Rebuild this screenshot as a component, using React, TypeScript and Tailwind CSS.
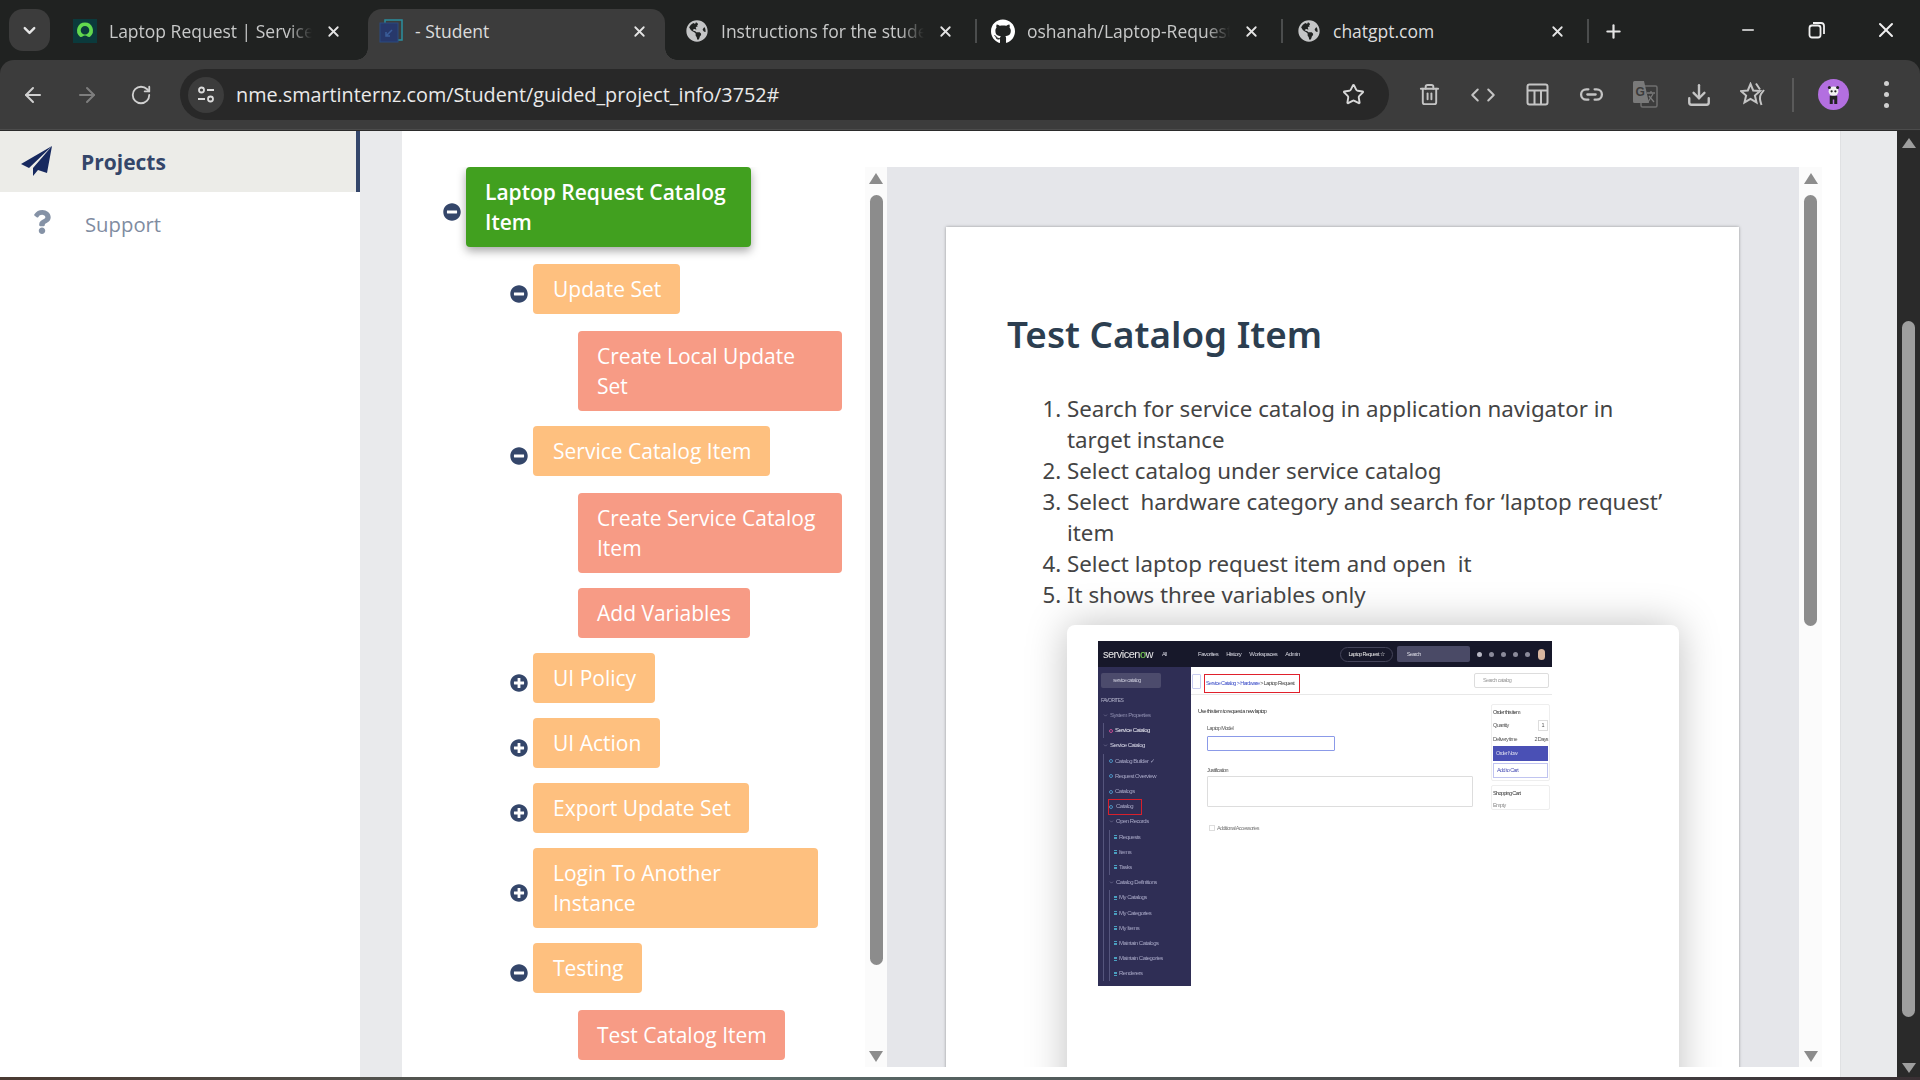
import React from "react";
import { ArrowLeft, ArrowRight, ChevronDown, ChevronLeft, ChevronRight, Download, Link2, Minus, Plus, RotateCw, Star, Trash2, X } from "lucide-react";
import { FaGithub, FaGlobeAmericas, FaMinusCircle, FaPlusCircle, FaQuestion } from "react-icons/fa";

function GreenFav() {
  return (
    <svg width="24" height="24" viewBox="0 0 24 24">
      <rect width="24" height="24" fill="#0b3a3c" />
      <path d="M12 3.5a8 8 0 0 0-5 14.2c.8.6 1.8.5 2.5-.1a3.9 3.9 0 0 1 5 0c.7.6 1.7.7 2.500.1A8 8 0 0 0 12 3.500zm0 12a4.300 4.300 0 1 1 0-8.600 4.300 4.300 0 0 1 0 8.600z" fill="#62d84e" />
    </svg>
  );
}
function StudentFav() {
  return (
    <svg width="24" height="24" viewBox="0 0 24 24" fill="none">
      <rect x="6" y="1" width="17" height="20" stroke="#2a8f9f" strokeWidth="1.500" />
      <rect x="1" y="4" width="18" height="19" fill="#27386b" stroke="#2b4a80" />
      <path d="M7 17l6-6M7 13v4h4" stroke="#3b5d9a" strokeWidth="1.500" />
    </svg>
  );
}
function Tab({ icon, title, active, fade, noSep }: { icon: React.ReactNode; title: string; active?: boolean; fade?: boolean; noSep?: boolean }) {
  return (
    <div className="relative flex h-[51px] w-[306px] shrink-0 items-center">
      {active && (
        <>
          <div className="absolute inset-y-0 left-0 w-[297px] rounded-t-[14px] bg-[#3c3c3c]" />
          <div className="absolute bottom-0 left-[-12px] size-[12px] bg-[radial-gradient(circle_at_0_0,#202221_11.500px,#3c3c3c_12px)]" />
          <div className="absolute bottom-0 left-[297px] size-[12px] bg-[radial-gradient(circle_at_100%_0,#202221_11.500px,#3c3c3c_12px)]" />
        </>
      )}
      <div className="relative flex w-[297px] items-center pl-[11px] pb-[7px]">
        <div className="flex size-[24px] shrink-0 items-center justify-center">{icon}</div>
        <div
          className={
            fade
              ? "ml-[12px] w-[203px] overflow-hidden whitespace-nowrap text-[17.500px] text-[#c8c9c9] [mask-image:linear-gradient(to_right,black_88%,transparent)]"
              : "ml-[12px] w-[203px] overflow-hidden whitespace-nowrap text-[17.500px] text-[#dcdcdc]"
          }
        >
          {title}
        </div>
        <X size={17} strokeWidth={2.5} className="ml-[13px] shrink-0 text-[#e4e4e4]" />
      </div>
      {!active && !noSep && <div className="mb-[7px] ml-[4px] h-[24px] w-[2px] shrink-0 bg-[#4b4d4d]" />}
    </div>
  );
}

function Tool({ children }: { children: React.ReactNode }) {
  return <div className="flex w-[54px] shrink-0 items-center justify-center text-[#c4c4c4]">{children}</div>;
}

function Chrome() {
  return (
    <div className="h-[131px] shrink-0 bg-[#202221] font-['Open_Sans',sans-serif]">
      <div className="flex h-[60px] items-end pl-[9px]">
        <div className="mb-[9px] flex h-[42px] w-[41px] shrink-0 items-center justify-center rounded-[14px] bg-[#3c3c3c] text-[#e6e6e6]">
          <ChevronDown size={19} strokeWidth={3} />
        </div>
        <div className="ml-[12px] flex">
          <Tab icon={<GreenFav />} title="Laptop Request | ServiceNow" fade noSep />
          <Tab icon={<StudentFav />} title="- Student" active />
          <Tab icon={<FaGlobeAmericas size={22} className="text-[#c4c5c6]" />} title="Instructions for the student" fade />
          <Tab icon={<FaGithub size={25} className="text-white" />} title="oshanah/Laptop-Request" fade />
          <Tab icon={<FaGlobeAmericas size={22} className="text-[#c4c5c6]" />} title="chatgpt.com" />
        </div>
        <Plus size={21} strokeWidth={2.5} className="mb-[18px] ml-[11px] shrink-0 text-[#e4e4e4]" />
        <div className="mb-[18px] ml-[115px] flex shrink-0 items-center text-[#f0f0f0]">
          <Minus size={18} strokeWidth={2} />
          <svg width="18" height="18" viewBox="0 0 18 18" fill="none" stroke="currentColor" strokeWidth="1.800" className="ml-[51px]">
            <rect x="1.500" y="4.500" width="11" height="12" rx="2.500" />
            <path d="M5 2h8a3 3 0 0 1 3 3v8" />
          </svg>
          <X size={24} strokeWidth={2} className="ml-[48px]" />
        </div>
      </div>
      <div className="flex h-[69px] items-center rounded-t-[14px] bg-[#3c3c3c]">
        <div className="flex w-[180px] shrink-0 items-center pl-[21px] text-[#d0d0d0]">
          <ArrowLeft size={24} strokeWidth={2} />
          <ArrowRight size={24} strokeWidth={2} className="ml-[30px] text-[#7e7e7e]" />
          <RotateCw size={22} strokeWidth={2} className="ml-[31px]" />
        </div>
        <div className="flex h-[51px] w-[1209px] shrink-0 items-center rounded-full bg-[#282828] pl-[8px]">
          <div className="flex size-[36px] items-center justify-center rounded-full bg-[#3c3c3c]">
            <svg width="20" height="20" viewBox="0 0 20 20" fill="none" stroke="#dcdcdc" strokeWidth="1.800">
              <circle cx="5.500" cy="5" r="2.500" />
              <path d="M11 5h7M2 14h7" />
              <circle cx="14.500" cy="14" r="2.500" />
            </svg>
          </div>
          <div className="ml-[12px] text-[19.800px] text-[#eaeaea]">nme.smartinternz.com/Student/guided_project_info/3752#</div>
          <Star size={23} strokeWidth={2} className="ml-auto mr-[24px] text-[#d8d8d8]" />
        </div>
        <div className="ml-[13px] flex items-center">
          <Tool><Trash2 size={23} strokeWidth={2} /></Tool>
          <Tool>
            <ChevronLeft size={22} strokeWidth={2.200} className="mr-[-3px]" />
            <ChevronRight size={22} strokeWidth={2.200} className="ml-[-3px]" />
          </Tool>
          <Tool>
            <svg width="23" height="23" viewBox="0 0 23 23" fill="none" stroke="currentColor" strokeWidth="2">
              <rect x="1.500" y="1.500" width="20" height="20" rx="2" />
              <path d="M1.500 7.500h20M8.500 7.500v14M15 7.500v14" />
            </svg>
          </Tool>
          <Tool><Link2 size={25} strokeWidth={2.200} /></Tool>
          <Tool>
            <svg width="25" height="27" viewBox="0 0 25 27">
              <rect x="8" y="5" width="16" height="21" rx="1.500" fill="none" stroke="#6f6f6f" strokeWidth="1.500" />
              <path d="M14 12h8M18 10v2M15 21l5-8M16 15l5 6" stroke="#7a7a7a" strokeWidth="1.300" fill="none" />
              <path d="M1.500 0H11l5 22H1.500A1.500 1.500 0 0 1 0 20.500v-19A1.500 1.500 0 0 1 1.500 0z" fill="#7a7a7a" />
              <text x="2.500" y="15" fontSize="12" fontWeight="700" fill="#3c3c3c" fontFamily="'Liberation Sans',sans-serif">G</text>
            </svg>
          </Tool>
          <Tool><Download size={26} strokeWidth={2.200} /></Tool>
          <Tool>
            <svg width="27" height="25" viewBox="0 0 27 25" fill="none" stroke="currentColor" strokeWidth="2">
              <path d="M10.500 2l2.700 6.500 6.800.6-5.100 4.500 1.600 6.800-6-3.600-6 3.600 1.600-6.800L1 9.100l6.800-.6z" />
              <path d="M16 1.500l4 6M24 8l-3 4c-1.500 2.500-1 7 .5 11" />
            </svg>
          </Tool>
          <div className="ml-[12px] h-[34px] w-[2px] shrink-0 bg-[#5a5a5a]" />
          <div className="ml-[24px] flex size-[31px] shrink-0 items-center justify-center rounded-full bg-[#b36fe0]">
            <svg width="15" height="22" viewBox="0 0 20 26">
              <circle cx="10" cy="8" r="6.500" fill="#f1f1f1" />
              <circle cx="4.500" cy="3" r="2" fill="#222" />
              <circle cx="15.500" cy="3" r="2" fill="#222" />
              <circle cx="7.500" cy="8" r="1.500" fill="#222" />
              <circle cx="12.500" cy="8" r="1.500" fill="#222" />
              <path d="M5 14h10v11h-4v-6H9v6H5z" fill="#222" />
            </svg>
          </div>
          <div className="ml-[33px] flex w-[8px] flex-col items-center gap-[6px]">
            <div className="size-[5px] rounded-full bg-[#d0d0d0]" />
            <div className="size-[5px] rounded-full bg-[#d0d0d0]" />
            <div className="size-[5px] rounded-full bg-[#d0d0d0]" />
          </div>
        </div>
      </div>
      <div className="h-[1px] bg-[#4c4c4c]" />
      <div className="h-[1px] bg-[#2b2b2b]" />
    </div>
  );
}

function Sidebar() {
  return (
    <div className="w-[360px] shrink-0 bg-white font-['Open_Sans',sans-serif]">
      <div className="flex h-[61px] items-center border-r-4 border-[#34466a] bg-[#ecece8] pl-[21px]">
        <svg width="31" height="31" viewBox="0 0 31 31">
          <path d="M31 0L0 18l8 4L31 0zM31 0L12 22v8l5-6 9 3z" fill="#17295f" />
        </svg>
        <span className="ml-[29px] pt-[2px] text-[21px] font-bold text-[#34466a]">Projects</span>
      </div>
      <div className="flex h-[66px] items-center pl-[30px]">
        <FaQuestion size={24} className="mt-[-6px] text-[#8592a6]" />
        <span className="ml-[31px] pb-[2px] text-[20.300px] text-[#7f8ca1]">Support</span>
      </div>
    </div>
  );
}

function Node({ label, kind, icon, w, mt = 15, nowrap }: { label: string; kind: "root" | "orange" | "child"; icon?: "plus" | "minus"; w: number; mt?: number; nowrap?: boolean }) {
  const cls =
    kind === "root"
      ? "rounded-[4px] bg-[#41a01f] px-[19px] py-[10px] font-semibold shadow-[0_4px_10px_rgba(0,0,0,0.35)]"
      : kind === "orange"
        ? "rounded-[4px] bg-[#fec07f] pl-[20px] pr-[18px] py-[10px]"
        : "rounded-[4px] bg-[#f79b85] px-[19px] py-[10px]";
  const margin = kind === "root" ? 41 : kind === "orange" ? 108 : 176;
  const Icon = icon === "plus" ? FaPlusCircle : FaMinusCircle;
  return (
    <div className="flex items-center" style={{ marginTop: mt, marginLeft: margin }}>
      {icon && <Icon size={18} className="mt-[10px] mr-[5px] shrink-0 text-[#34466a]" />}
      <div className={cls + (nowrap ? " whitespace-nowrap" : "") + " text-[21px] leading-[30px] text-white"} style={{ width: w }}>
        {label}
      </div>
    </div>
  );
}

function ScrollTrack({ className, thumbTop, thumbH }: { className: string; thumbTop: number; thumbH: number }) {
  return (
    <div className={className}>
      <div className="mt-[6px] h-0 w-0 border-x-[7px] border-b-[11px] border-x-transparent border-b-[#8c8c8c]" />
      <div className="w-[13px] rounded-full bg-[#8c8c8c]" style={{ marginTop: thumbTop, height: thumbH }} />
      <div className="mt-auto mb-[5px] h-0 w-0 border-x-[7px] border-t-[11px] border-x-transparent border-t-[#8c8c8c]" />
    </div>
  );
}

type Kind = "g" | "i" | "s" | "l";
const navRows: [string, Kind, string][] = [
  ["System Properties", "g", "#8f8fb0"],
  ["Service Catalog", "i", "#ececf4"],
  ["Service Catalog", "g", "#dcdcea"],
  ["Catalog Builder ✓", "i", "#a8a8c6"],
  ["Request Overview", "i", "#a8a8c6"],
  ["Catalogs", "i", "#a8a8c6"],
  ["Catalog", "i", "#a8a8c6"],
  ["Open Records", "s", "#a8a8c6"],
  ["Requests", "l", "#a8a8c6"],
  ["Items", "l", "#a8a8c6"],
  ["Tasks", "l", "#a8a8c6"],
  ["Catalog Definitions", "s", "#a8a8c6"],
  ["My Catalogs", "l", "#a8a8c6"],
  ["My Categories", "l", "#a8a8c6"],
  ["My Items", "l", "#a8a8c6"],
  ["Maintain Catalogs", "l", "#a8a8c6"],
  ["Maintain Categories", "l", "#a8a8c6"],
  ["Renderers", "l", "#a8a8c6"],
];

function NavRow({ text, kind, color }: { text: string; kind: Kind; color: string }) {
  const label = <span style={{ color }}>{text}</span>;
  return (
    <div className="flex h-[15.200px] items-stretch text-[6px] tracking-[-0.5px]">
      {kind !== "g" && <div className="w-[6px] shrink-0 border-l border-[#55557c]" />}
      {kind === "l" && <div className="w-[5px] shrink-0 border-l border-[#55557c]" />}
      <div className="flex items-center gap-[1px]">
        {kind === "g" || kind === "s" ? <ChevronDown size={5} className="mr-[1px] text-[#a0a0c0]" /> : null}
        {kind === "i" ? <div className={text === "Service Catalog" ? "mr-[1px] size-[4px] rounded-full border border-[#c04a90]" : "mr-[1px] size-[4px] rounded-full border border-[#4a90c0]"} /> : null}
        {kind === "l" ? <div className="mr-[1px] h-[4px] w-[3px] border-y border-[#4aa0c0] bg-[linear-gradient(#4aa0c0,#4aa0c0)] bg-[length:100%_1px] bg-center bg-no-repeat" /> : null}
        {text === "Catalog" ? <span className="-ml-[7px] border-[1.500px] border-[#d8202c] py-[2.500px] pl-[7px] pr-[8px]">{label}</span> : label}
      </div>
    </div>
  );
}

function MiniScreen() {
  return (
    <div className="ml-[31px] flex h-[345px] w-[454px] flex-col overflow-hidden font-['Liberation_Sans',sans-serif] text-[5.500px] tracking-[-0.6px] blur-[0.5px]">
      <div className="flex h-[26px] shrink-0 items-center bg-[#17182a] text-[#d8d8e2]">
        <div className="flex w-[93px] items-center pl-[5px]">
          <span className="text-[11px] leading-none tracking-[-0.5px] text-[#e8e8e8]">servicen<span className="text-[#7ed957]">o</span>w</span>
          <span className="ml-[9px]">All</span>
        </div>
        <div className="ml-[7px] flex gap-[8px] text-[6px] tracking-[-0.5px]">
          <span>Favorites</span>
          <span>History</span>
          <span>Workspaces</span>
          <span>Admin</span>
        </div>
        <div className="ml-[40px] flex h-[15px] w-[53px] shrink-0 items-center justify-center rounded-full border border-[#44445a] text-[#e8e8e8]">Laptop Request ☆</div>
        <div className="ml-[4px] flex h-[16px] w-[73px] shrink-0 items-center rounded-[2px] bg-[#4a4a66] pl-[10px]">Search</div>
        <div className="ml-[7px] flex items-center gap-[7px]">
          <div className="size-[5px] rounded-full bg-[#b8b8c4]" />
          <div className="size-[5px] rounded-full bg-[#8a8a9a]" />
          <div className="size-[5px] rounded-full bg-[#8a8a9a]" />
          <div className="size-[5px] rounded-full bg-[#8a8a9a]" />
          <div className="size-[5px] rounded-full bg-[#8a8a9a]" />
          <div className="ml-[1px] h-[11px] w-[7px] rounded-full bg-[#d9b7a0]" />
        </div>
      </div>
      <div className="flex min-h-0 flex-1">
        <div className="w-[93px] shrink-0 bg-[#2f2e55] pl-[5px]">
          <div className="-ml-[2px] mt-[6px] flex h-[15px] w-[60px] items-center rounded-[2px] bg-[#4c4b6c] pl-[12px] text-[#c8c8d8]">service catalog</div>
          <div className="-ml-[2px] mt-[5px] h-[15px] text-[5px] leading-[15px] text-[#b0b0c8]">FAVORITES</div>
          {navRows.map(([t, k, c], n) => (
            <NavRow key={n} text={t} kind={k} color={c} />
          ))}
        </div>
        <div className="min-w-0 flex-1 bg-white text-[#555]">
          <div className="flex h-[28px] items-start border-b border-[#e8e8e8] pl-[1px] pr-[3px] pt-[7px]">
            <div className="h-[15px] w-[9px] rounded-[1px] border border-[#c8ccf0]" />
            <div className="ml-[3px] flex h-[19px] w-[96px] items-center whitespace-nowrap border border-[#e0202c] pl-[1px] text-[#444]">
              <span className="text-[#3b4dc8]">Service Catalog &gt; Hardware</span>&nbsp;&gt; Laptop Request
            </div>
            <div className="-mt-[1px] ml-auto flex h-[15px] w-[75px] items-center rounded-[2px] border border-[#ddd] pl-[8px] text-[#999]">Search catalog</div>
          </div>
          <div className="flex">
            <div className="w-[292px] shrink-0 pl-[7px] pt-[12px]">
              <div className="text-[#333]">Use this item to request a new laptop</div>
              <div className="ml-[9px] mt-[9px]">Laptop Model</div>
              <div className="ml-[9px] mt-[3px] h-[15px] w-[128px] rounded-[1px] border border-[#8b9ae8]" />
              <div className="ml-[9px] mt-[15px]">Justification</div>
              <div className="ml-[9px] mt-[2px] h-[31px] w-[266px] rounded-[1px] border border-[#ddd]" />
              <div className="ml-[11px] mt-[17px] flex items-center gap-[2px] text-[#777]">
                <div className="size-[6px] border border-[#ddd]" />
                Additional Accessories
              </div>
            </div>
            <div className="ml-[8px] w-[59px] shrink-0 pt-[9px]">
              <div className="h-[77px] rounded-[2px] border border-[#eee] px-[1px]">
                <div className="mt-[3px] text-[#333]">Order this item</div>
                <div className="mt-[4px] flex items-center justify-between">Quantity<span className="border border-[#ddd] px-[3px]">1</span></div>
                <div className="mt-[4px] flex justify-between">Delivery time<span>2 Days</span></div>
                <div className="mt-[3px] flex h-[15px] items-center bg-[#4a50b5] pl-[3px] text-[#dde]">Order Now</div>
                <div className="mt-[2px] flex h-[15px] items-center border border-[#c0c4f0] pl-[3px] text-[#4a50b5]">Add to Cart</div>
              </div>
              <div className="mt-[4px] h-[25px] rounded-[2px] border border-[#eee] px-[1px] pt-[3px]">
                <div className="text-[#333]">Shopping Cart</div>
                <div className="mt-[4px] text-[#888]">Empty</div>
              </div>
            </div>
          </div>
        </div>
      </div>
    </div>
  );
}

function Content() {
  return (
    <div className="flex h-full w-[912px] shrink-0 overflow-hidden bg-[#e5e6ea] pl-[59px]">
      <div className="mt-[60px] h-[1100px] w-[793px] shrink-0 bg-white pl-[61px] pt-[83px] shadow-[0_0_3px_rgba(0,0,0,0.35)]">
        <h1 className="text-[36.800px] font-semibold leading-[48px] text-[#2c3e50]">Test Catalog Item</h1>
        <ol className="ml-[60px] mt-[35px] w-[611px] list-decimal pr-[10px] text-[22.300px] leading-[31px] text-[#444]">
          <li>Search for service catalog in application navigator in target instance</li>
          <li>Select catalog under service catalog</li>
          <li>Select{"\u00a0"} hardware category and search for ‘laptop request’ item</li>
          <li>Select laptop request item and open{"\u00a0"} it</li>
          <li>It shows three variables only</li>
        </ol>
        <div className="ml-[60px] mt-[15px] h-[500px] w-[612px] rounded-[8px] bg-white pt-[16px] shadow-[0_0_40px_rgba(0,0,0,0.25)]">
          <MiniScreen />
        </div>
      </div>
    </div>
  );
}

export default function App() {
  return (
    <div className="flex h-screen w-[1920px] flex-col overflow-hidden bg-white">
      <Chrome />
      <div className="flex h-[946px] shrink-0">
        <Sidebar />
        <div className="w-[42px] shrink-0 bg-[#e9eaec]" />
        <div className="flex w-[1438px] shrink-0 flex-col bg-white pt-[36px]">
          <div className="flex h-[900px] shrink-0">
            <div className="w-[463px] shrink-0 overflow-hidden font-['Open_Sans',sans-serif]">
              <Node label="Laptop Request Catalog Item" kind="root" icon="minus" w={285} mt={0} />
              <Node label="Update Set" kind="orange" icon="minus" w={147} mt={17} nowrap />
              <Node label="Create Local Update Set" kind="child" w={264} mt={17} />
              <Node label="Service Catalog Item" kind="orange" icon="minus" w={237} nowrap />
              <Node label="Create Service Catalog Item" kind="child" w={264} mt={17} />
              <Node label="Add Variables" kind="child" w={172} nowrap />
              <Node label="UI Policy" kind="orange" icon="plus" w={122} nowrap />
              <Node label="UI Action" kind="orange" icon="plus" w={127} nowrap />
              <Node label="Export Update Set" kind="orange" icon="plus" w={216} nowrap />
              <Node label="Login To Another Instance" kind="orange" icon="plus" w={285} />
              <Node label="Testing" kind="orange" icon="minus" w={109} nowrap />
              <Node label="Test Catalog Item" kind="child" w={207} mt={17} nowrap />
            </div>
            <ScrollTrack className="flex w-[22px] shrink-0 flex-col items-center bg-[#fbfbfb]" thumbTop={11} thumbH={770} />
            <Content />
            <ScrollTrack className="flex w-[23px] shrink-0 flex-col items-center bg-[#fbfbfb]" thumbTop={11} thumbH={431} />
          </div>
        </div>
        <div className="w-[57px] shrink-0 border-l border-[#e0e1e3] bg-[#e9eaec]" />
        <div className="flex w-[23px] shrink-0 flex-col items-center bg-[#2a2a2a]">
          <div className="mt-[7px] h-0 w-0 border-x-[7px] border-b-[10px] border-x-transparent border-b-[#9e9e9e]" />
          <div className="mt-[173px] h-[696px] w-[13px] rounded-full bg-[#9e9e9e]" />
          <div className="mt-auto mb-[4px] h-0 w-0 border-x-[7px] border-t-[10px] border-x-transparent border-t-[#9e9e9e]" />
        </div>
      </div>
      <div className="h-[3px] shrink-0 bg-[linear-gradient(to_right,#4a3a32,#5a6a68_40%,#3a3034_100%)]" />
    </div>
  );
}
